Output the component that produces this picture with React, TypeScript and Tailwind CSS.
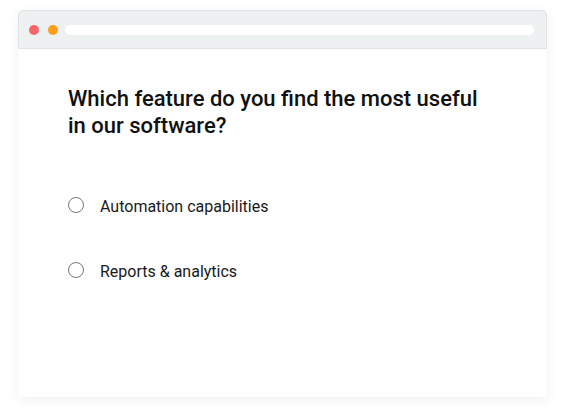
import { useState } from "react";

const options = ["Automation capabilities", "Reports & analytics"];

function App() {
  const [picked, setPicked] = useState<number | null>(null);

  return (
    <div className="w-[565px] h-[418px] bg-white pl-[18px] pt-[10px]" style={{ fontFamily: "Roboto, 'Noto Sans', sans-serif" }}>
      <div className="w-[529px] h-[387px] bg-[#fefefe] rounded-t-[5px] shadow-[0_3px_12px_rgba(0,0,0,0.06)] flex flex-col">
        <div className="h-[39px] bg-[#eef1f2] border border-[#e0e3e5] rounded-t-[5px] flex items-center pl-[10px] pr-[12px]">
          <span className="w-[10px] h-[10px] rounded-full bg-[#f7656a]"></span>
          <span className="w-[10px] h-[10px] rounded-full bg-[#fd9f17] ml-[9px]"></span>
          <div className="flex-1 h-[10px] rounded-full bg-white ml-[7px]"></div>
        </div>
        <div className="pl-[50px] pt-[36px]">
          <h1 className="text-[22px] leading-[27px] font-medium text-[#111] w-[430px]">
            Which feature do you find the most useful in our software?
          </h1>
          <div className="mt-[56px] flex flex-col gap-[41px]">
            {options.map((o, i) => (
              <label key={o} className="flex items-start h-[24px] cursor-pointer" onClick={() => setPicked(i)}>
                <span className="mt-[2px] w-[16px] h-[16px] rounded-full border border-[#777] bg-white flex items-center justify-center">
                  {picked === i && <span className="w-[8px] h-[8px] rounded-full bg-[#333]"></span>}
                </span>
                <span className="ml-[16px] text-[16px] leading-[24px] text-[#1a1a1a]">{o}</span>
              </label>
            ))}
          </div>
        </div>
      </div>
    </div>
  );
}

export default App;
